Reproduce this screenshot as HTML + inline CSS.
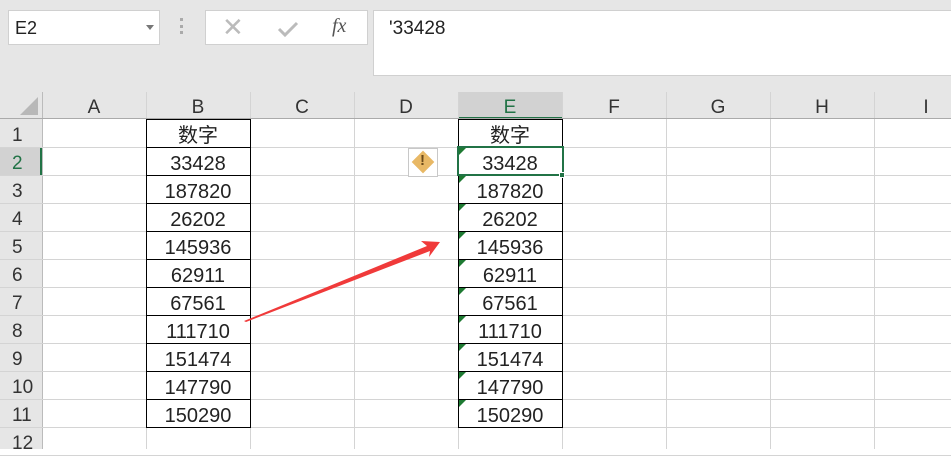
<!DOCTYPE html>
<html><head><meta charset="utf-8"><style>
*{margin:0;padding:0;box-sizing:border-box}
body{width:951px;height:449px;overflow:hidden;background:#fff;position:relative;font-family:"Liberation Sans","Noto Sans CJK SC",sans-serif}
.top{position:absolute;left:0;top:0;width:951px;height:92px;background:#e6e6e6}
.box{position:absolute;background:#fff;border:1px solid #d0d0d0}
.c{position:absolute;text-align:center;font-size:20px;color:#222;line-height:28px}
.h{position:absolute;background:#e6e6e6;color:#333;font-size:19px;text-align:center}
.gl{position:absolute;background:#d4d4d4}
.bk{position:absolute;background:#000}
.tri{position:absolute;width:0;height:0;border-top:7px solid #1e7a32;border-right:7px solid transparent}
</style></head><body>
<div class="top"></div>
<div class="box" style="left:8px;top:10px;width:152px;height:35px"><span style="position:absolute;left:6px;top:7px;font-size:18px;color:#222">E2</span><span style="position:absolute;left:137px;top:14px;border-top:5px solid #777;border-left:4px solid transparent;border-right:4px solid transparent"></span></div>
<div style="position:absolute;left:180px;top:18px;width:3px;height:16px;border-left:3px dotted #aaa"></div>
<div class="box" style="left:205px;top:10px;width:163px;height:35px">
<span style="position:absolute;left:16px;top:1px;font-size:26px;color:#bbb">✕</span>
<svg style="position:absolute;left:70px;top:9px" width="24" height="18"><path d="M3 9 L9 15 L21 3" stroke="#bbb" stroke-width="3" fill="none"/></svg>
<span style="position:absolute;left:126px;top:4px;font-size:20px;color:#555;font-style:italic;font-family:'Liberation Serif',serif">fx</span></div>
<div class="box" style="left:373px;top:10px;width:590px;height:66px"><span style="position:absolute;left:15px;top:7px;font-size:19px;color:#222">'33428</span></div>
<div id="g"></div>
<svg style="position:absolute;left:0;top:0" width="951" height="449"><polygon points="244,321 427,246 421,241 440,242 429,257 430,251 246,322" fill="#f03a3a"/></svg>
<script>
var g=document.getElementById('g'),s='';
var cols=[42,146,250,354,458,562,666,770,874,978],L='ABCDEFGHI';
s+='<div class="h" style="left:0;top:92px;width:951px;height:27px"></div>';
s+='<div style="position:absolute;left:20px;top:97px;width:0;height:0;border-bottom:18px solid #b8b8b8;border-left:18px solid transparent"></div>';
s+='<div class="h" style="left:458px;top:92px;width:104px;height:27px;background:#d2d2d2;border-bottom:2px solid #217346"></div>';
for(var i=0;i<9;i++){s+='<div class="h" style="left:'+cols[i]+'px;top:92px;width:104px;height:27px;line-height:32px;background:transparent;color:'+(i==4?'#217346':'#333')+'">'+L[i]+'</div>';
s+='<div class="gl" style="left:'+cols[i]+'px;top:92px;width:1px;height:357px;'+(i==0?'background:#bbb':'')+'"></div>';}
s+='<div class="gl" style="left:0;top:118px;width:951px;height:1px;background:#aaa"></div>';
s+='<div class="h" style="left:0;top:119px;width:42px;height:330px;background:#e6e6e6"></div>';
s+='<div class="h" style="left:0;top:147px;width:42px;height:28px;background:#d2d2d2;border-right:2px solid #217346"></div>';
var B=['数字','33428','187820','26202','145936','62911','67561','111710','151474','147790','150290'];
for(var r=0;r<12;r++){var y=119+r*28;
s+='<div class="gl" style="left:0;top:'+(y+28)+'px;width:951px;height:1px"></div>';
s+='<div class="h" style="left:0;top:'+y+'px;width:42px;height:28px;line-height:34px;text-align:left;padding-left:12px;background:transparent;color:'+(r==1?'#217346':'#333')+'">'+(r+1)+'</div>';
if(r<11){s+='<div class="c" style="left:146px;top:'+(y+3)+'px;width:104px">'+B[r]+'</div><div class="c" style="left:458px;top:'+(y+3)+'px;width:104px">'+B[r]+'</div>';
s+='<div class="bk" style="left:146px;top:'+y+'px;width:105px;height:1px"></div><div class="bk" style="left:458px;top:'+y+'px;width:105px;height:1px"></div>';
if(r>0)s+='<div class="tri" style="left:459px;top:'+(y+1)+'px"></div>';}}
s+='<div class="bk" style="left:146px;top:427px;width:105px;height:1px"></div><div class="bk" style="left:458px;top:427px;width:105px;height:1px"></div>';
[146,250,458,562].forEach(function(x){s+='<div class="bk" style="left:'+x+'px;top:119px;width:1px;height:309px"></div>'});
s+='<div style="position:absolute;left:457px;top:146px;width:107px;height:30px;border:2px solid #217346"></div>';
s+='<div style="position:absolute;left:559px;top:172px;width:6px;height:6px;background:#217346;border:1px solid #fff"></div>';
s+='<div style="position:absolute;left:408px;top:148px;width:30px;height:29px;border:1px solid #c8c8c8;background:#fff"><div style="position:absolute;left:6px;top:5px;width:16px;height:16px;background:#e8b865;transform:rotate(45deg)"></div><span style="position:absolute;left:11px;top:3px;font-size:15px;font-weight:bold;color:#6b4a1a">!</span></div>';
g.innerHTML=s;
</script>
</body></html>
